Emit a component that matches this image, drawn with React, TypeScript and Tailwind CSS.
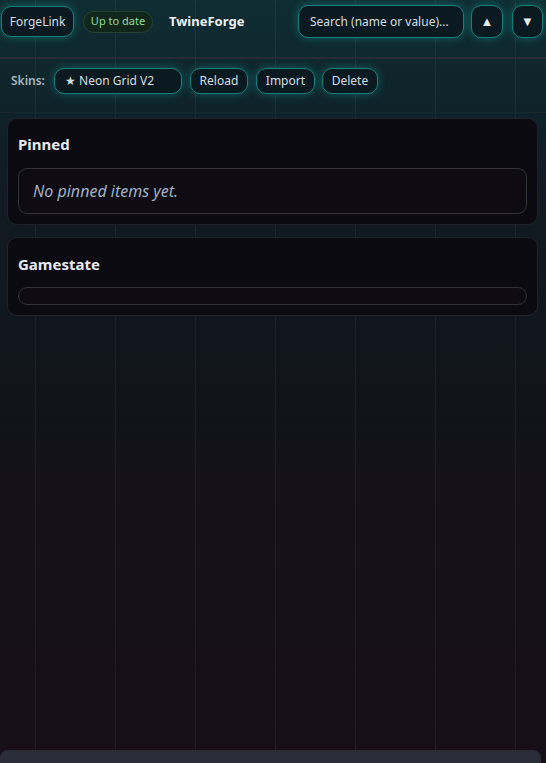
import React from "react";

const font = { fontFamily: '"Noto Sans", "Open Sans", sans-serif' };

function GlowBtn({ children, className = "" }: { children: React.ReactNode; className?: string }) {
  return (
    <div
      className={
        "flex items-center justify-center rounded-[10px] border border-[#14807c] bg-[#0a1a20] text-[12px] text-[#d6dde2] shadow-[0_0_10px_rgba(20,184,170,0.4)] " +
        className
      }
    >
      {children}
    </div>
  );
}

export default function App() {
  return (
    <div
      className="min-h-screen w-full bg-[linear-gradient(to_bottom,#0f2d33_0px,#0f242b_90px,#111a22_200px,#11151c_360px,#141119_480px,#170e18_763px)]"
      style={font}
    >
      <div className="flex min-h-screen flex-col bg-[linear-gradient(to_right,rgba(255,255,255,0.05)_1px,transparent_1px)] bg-[length:80px_80px] bg-[position:35px_0]">
        {/* Header */}
        <div className="flex h-[57px] items-start pl-[1px] pr-[3px] pt-[5px]">
          <div className="flex h-[33px] w-full items-center">
            <GlowBtn className="h-[31px] w-[73px]">ForgeLink</GlowBtn>
            <div className="ml-[9px] flex h-[22px] w-[70px] items-center justify-center rounded-full border border-[#27422f] bg-[#11261b] text-[11px] text-[#8fdb9c]">
              Up to date
            </div>
            <div className="ml-[16px] text-[13px] font-bold text-[#eef2f4]">TwineForge</div>
            <div className="flex-1" />
            <GlowBtn className="h-[33px] w-[166px] justify-start pl-[11px] text-[#8c989e]">
              Search (name or value)...
            </GlowBtn>
            <GlowBtn className="ml-[7px] h-[33px] w-[32px] text-[13px] text-[#e8ecef]">▲</GlowBtn>
            <GlowBtn className="ml-[9px] h-[33px] w-[31px] text-[13px] text-[#e8ecef]">▼</GlowBtn>
          </div>
        </div>
        <div className="h-[2px] bg-[#262c34]" />
        {/* Toolbar */}
        <div className="flex h-[54px] items-start border-b border-[#1c262d] pl-[11px] pt-[9px]">
          <div className="flex h-[26px] items-center">
            <span className="text-[12px] font-semibold text-[#a9b5bd]">Skins:</span>
            <GlowBtn className="ml-[9px] h-[26px] w-[128px] justify-start pl-[10px]">★ Neon Grid V2</GlowBtn>
            <GlowBtn className="ml-[8px] h-[26px] w-[58px]">Reload</GlowBtn>
            <GlowBtn className="ml-[8px] h-[26px] w-[59px]">Import</GlowBtn>
            <GlowBtn className="ml-[7px] h-[26px] w-[56px]">Delete</GlowBtn>
          </div>
        </div>
        {/* Cards */}
        <div className="flex flex-col gap-[12px] pl-[7px] pr-[8px] pt-[5px]">
          <div className="rounded-[10px] border border-[#20222a] bg-[#0b0a10] px-[10px] pb-[10px] pt-[15px]">
            <div className="h-[20px] text-[15px] font-bold leading-[20px] text-[#e6e9ee]">Pinned</div>
            <div className="mt-[14px] flex h-[46px] items-center rounded-[9px] border border-[#30333c] bg-[#0e0c12] pl-[14px] text-[16px] italic text-[#9fb0c8]">
              No pinned items yet.
            </div>
          </div>
          <div className="rounded-[10px] border border-[#20222a] bg-[#0b0a10] px-[10px] pb-[10px] pt-[16px]">
            <div className="h-[20px] text-[15px] font-bold leading-[20px] text-[#e6e9ee]">Gamestate</div>
            <div className="mt-[13px] h-[18px] rounded-[9px] border border-[#30333c] bg-[#0e0c12]" />
          </div>
        </div>
        <div className="flex-1" />
        <div className="h-[13px] w-[541px] rounded-t-[8px] bg-[#2a2d38]" />
      </div>
    </div>
  );
}
